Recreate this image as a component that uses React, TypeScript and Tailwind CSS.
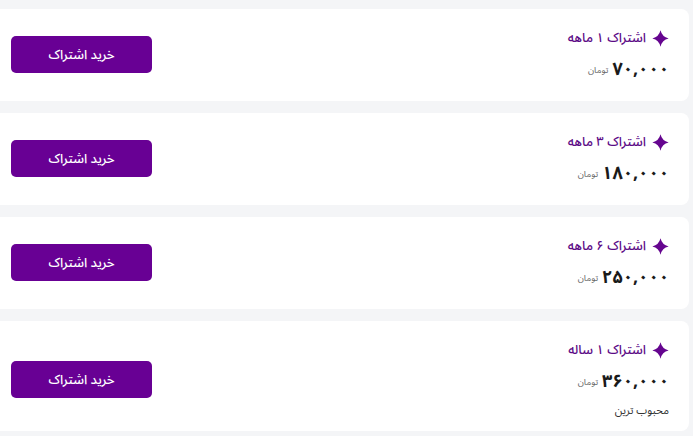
import React from "react";

const Sparkle = () => (
  <svg width="17" height="17" viewBox="0 0 24 24" className="shrink-0">
    <path d="M12 0.5 Q14.2 9.8 23.5 12 Q14.2 14.2 12 23.5 Q9.8 14.2 0.5 12 Q9.8 9.8 12 0.5 Z" fill="#65058f" />
  </svg>
);

type Plan = { title: string; price: string; note?: string };

const plans: Plan[] = [
  { title: "اشتراک ۱ ماهه", price: "۷۰,۰۰۰" },
  { title: "اشتراک ۳ ماهه", price: "۱۸۰,۰۰۰" },
  { title: "اشتراک ۶ ماهه", price: "۲۵۰,۰۰۰" },
  { title: "اشتراک ۱ ساله", price: "۳۶۰,۰۰۰", note: "محبوب ترین" },
];

export default function App() {
  return (
    <div
      className="w-[693px] h-[436px] overflow-hidden bg-[#f4f5f7] pt-[9px] pr-[4px]"
      style={{ fontFamily: '"Noto Sans Arabic", "Noto Naskh Arabic", "DejaVu Sans", "Noto Sans", sans-serif' }}
    >
      <div className="flex flex-col gap-[12px] -ml-[9px]">
        {plans.map((p) => (
          <div
            key={p.title}
            dir="rtl"
            className={`bg-white rounded-lg flex items-center justify-between px-[20px] pt-[19px] ${p.note ? "pb-[12px]" : "pb-[20px]"}`}
          >
            <div className="flex flex-col items-start">
              <div className="flex items-center gap-[6px] h-[20px]">
                <Sparkle />
                <span className="text-[13px] leading-[20px] font-medium text-[#5c0a86]">{p.title}</span>
              </div>
              <div className="flex items-center gap-[4px] mt-[9px] h-[24px]">
                <span className="text-[18px] leading-[24px] font-bold text-[#1a1a1a] tracking-[1px]">{p.price}</span>
                <span className="text-[9px] leading-[14px] mt-[3px] text-[#666]">تومان</span>
              </div>
              {p.note && (
                <div className="mt-[10px] text-[11px] leading-[16px] text-[#333] h-[16px]">{p.note}</div>
              )}
            </div>
            <button className="w-[141px] h-[37px] rounded-[5px] bg-[#680094] text-white text-[13px] leading-[20px] font-medium">
              خرید اشتراک
            </button>
          </div>
        ))}
      </div>
    </div>
  );
}
